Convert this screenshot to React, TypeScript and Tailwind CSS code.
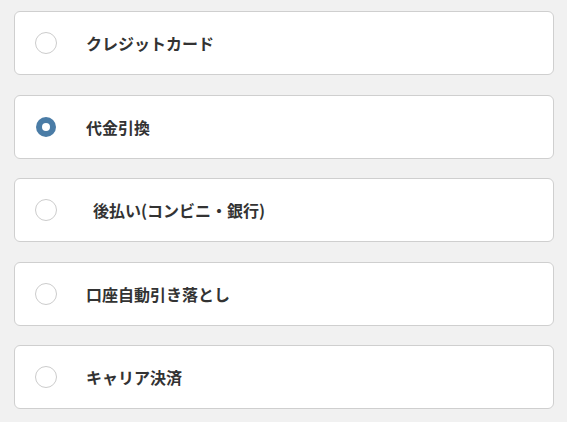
const OPTIONS = [
  { label: 'クレジットカード', checked: false },
  { label: '代金引換', checked: true },
  { label: '後払い(コンビニ・銀行)', checked: false, indent: true },
  { label: '口座自動引き落とし', checked: false },
  { label: 'キャリア決済', checked: false },
];

export default function App() {
  return (
    <div
      className="min-h-[422px] w-[567px] bg-[#f1f1f1] pl-[14px] pr-[13px] pt-[11px]"
      style={{ fontFamily: '"Noto Sans CJK JP", "Noto Sans", sans-serif' }}
    >
      <div className="flex flex-col gap-[19.5px]">
        {OPTIONS.map(o => (
          <label
            key={o.label}
            className="flex h-[64px] items-center rounded-[6px] border border-[#cfcfcf] bg-white pl-[20px]"
          >
            {o.checked ? (
              <span className="ml-[1px] mr-[30px] flex h-[20px] w-[20px] shrink-0 items-center justify-center rounded-full bg-[#4a7ca6]">
                <span className="h-[8px] w-[8px] rounded-full bg-white" />
              </span>
            ) : (
              <span className="mr-[29px] h-[22px] w-[22px] shrink-0 rounded-full border border-[#cccccc] bg-white" />
            )}
            <span className={`text-[16px] font-bold text-[#333333] ${o.indent ? 'ml-[7px]' : ''}`}>
              {o.label}
            </span>
          </label>
        ))}
      </div>
    </div>
  );
}
